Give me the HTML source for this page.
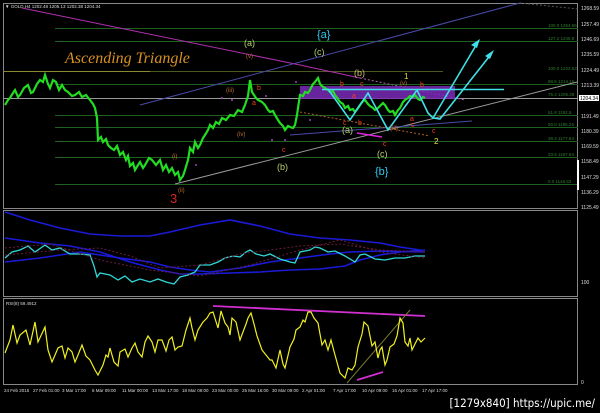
<!DOCTYPE html>
<html><head><meta charset="utf-8"><style>
html,body{margin:0;padding:0;background:#000;width:600px;height:413px;overflow:hidden}
svg{display:block;font-family:"Liberation Sans",sans-serif}
</style></head><body>
<svg width="600" height="413" viewBox="0 0 600 413" xmlns="http://www.w3.org/2000/svg">
<rect width="600" height="413" fill="#000"/>
<rect x="3.5" y="3.5" width="574" height="205" fill="none" stroke="#888" stroke-width="1"/>
<rect x="3.5" y="210.5" width="574" height="86" fill="none" stroke="#888" stroke-width="1"/>
<rect x="3.5" y="298.5" width="574" height="86" fill="none" stroke="#888" stroke-width="1"/>
<text x="5" y="8" font-size="4.5" fill="#ddd">▼ GOLD,H4  1202.48  1205.13  1202.38  1204.34</text>
<g stroke="#1f5f1f" stroke-width="1">
<line x1="55" y1="28.5" x2="578" y2="28.5"/><line x1="55" y1="41.5" x2="578" y2="41.5"/>
<line x1="55" y1="84.5" x2="578" y2="84.5"/>
<line x1="55" y1="115.5" x2="578" y2="115.5"/><line x1="55" y1="127.5" x2="578" y2="127.5"/>
<line x1="55" y1="141.5" x2="578" y2="141.5"/><line x1="55" y1="157.5" x2="578" y2="157.5"/>
<line x1="55" y1="184.5" x2="578" y2="184.5"/>
</g>
<line x1="3" y1="71.5" x2="150" y2="71.5" stroke="#8a8a30"/>
<line x1="150" y1="71.5" x2="443" y2="71.5" stroke="#4a5a20"/>
<line x1="3" y1="98.5" x2="578" y2="98.5" stroke="#999"/>
<g font-size="4.5" fill="#2f7f2f">
<text x="548" y="27">100.0 1254.55</text><text x="548" y="40">127.2 1245.8</text><text x="548" y="70">100.0 1223.53</text>
<text x="548" y="83">88.6 1214.15</text><text x="548" y="96">76.4 1206.28</text><text x="548" y="114">61.8 1192.5</text>
<text x="548" y="126">50.0 1185.25</text><text x="548" y="140">38.2 1177.84</text><text x="548" y="156">23.6 1167.94</text><text x="548" y="183">0.0 1146.53</text>
</g>
<g font-size="5" fill="#ddd">
<text x="581" y="10">1268.59</text><text x="581" y="26">1257.49</text><text x="581" y="41">1246.69</text><text x="581" y="56">1235.59</text>
<text x="581" y="72">1224.49</text><text x="581" y="87">1213.39</text><text x="581" y="118">1191.49</text><text x="581" y="133">1180.39</text>
<text x="581" y="148">1169.59</text><text x="581" y="163">1158.49</text><text x="581" y="179">1147.29</text><text x="581" y="194">1136.29</text><text x="581" y="209">1125.49</text>
<text x="581" y="284">100</text><text x="581" y="384">0</text>
</g>
<rect x="579" y="95" width="20" height="6" fill="#fff"/><text x="580" y="100" font-size="5" fill="#000">1204.34</text>
<rect x="577" y="160" width="2" height="30" fill="#fff"/>
<polyline points="22,8 300,65 360,78" fill="none" stroke="#b030b0" stroke-width="1"/>
<line x1="360" y1="78" x2="465" y2="100" stroke="#b060b0" stroke-dasharray="2,2"/>
<line x1="140" y1="105" x2="520" y2="3" stroke="#4a4aa8"/>
<line x1="520" y1="3" x2="578" y2="9" stroke="#555" stroke-dasharray="2,2"/>
<line x1="175" y1="184" x2="577" y2="82" stroke="#999"/>
<line x1="290" y1="135" x2="472" y2="121" stroke="#4a4aa8"/>
<line x1="300" y1="112" x2="430" y2="136" stroke="#b06020" stroke-dasharray="2,2"/>
<line x1="357" y1="133" x2="382" y2="137" stroke="#e020e0" stroke-width="1.5"/>
<rect x="300" y="86" width="155" height="13" fill="#7a2ab8" opacity="0.85"/>
<polyline fill="none" stroke="#22dd22" stroke-width="2.2" points="5,105 8,100 10,98 13,93 15,90 18,97 20,95 24,88 28,85 31,93 33,92 37,84 40,80 43,82 45,75 48,84 50,88 53,80 56,82 59,90 62,85 65,90 68,92 72,96 75,95 79,92 82,97 86,95 90,100 93,104 95,108 97,118 98,140 101,137 103,142 106,139 108,145 111,148 114,150 117,146 120,155 123,152 126,160 128,156 130,166 133,163 135,170 138,165 140,162 143,168 145,165 149,158 152,160 156,165 160,160 163,170 166,165 169,172 172,168 175,175 178,172 180,180 183,176 185,170 188,160 190,148 193,152 195,142 198,148 200,145 203,138 205,135 208,130 210,125 213,128 216,122 219,124 222,118 226,120 230,115 234,116 238,110 242,112 245,105 248,96 250,80 252,92 254,95 256,98 258,100 262,102 265,105 268,110 270,112 273,111 275,115 278,120 280,123 283,126 285,130 288,126 290,127 293,128 295,125 297,115 298,108 300,95 303,96 305,92 308,93 310,90 313,84 315,82 318,78 320,84 322,86 325,88 328,90 330,92 333,91 335,95 338,99 340,102 343,104 345,108 348,106 350,110 353,109 355,112 358,108 360,105 363,101 365,100 368,104 370,106 373,108 375,110 378,108 380,106 383,103 385,105 388,110 390,112 393,111 395,115 398,110 400,108 403,102 405,100 408,98 410,96 413,97 415,95 418,99 420,100 423,97 425,98"/>
<line x1="322" y1="89.5" x2="504" y2="89.5" stroke="#40e0e8" stroke-width="1.6"/>
<polyline points="328,89 350,120 368,93 388,130 417,90 428,113 433,118 478,42" fill="none" stroke="#40e0e8" stroke-width="1.6"/>
<polyline points="433,118 440,119 492,53" fill="none" stroke="#40e0e8" stroke-width="1.6"/>
<polygon points="480,39 471,45 477,48" fill="#40e0e8"/>
<polygon points="494,50 485,56 490,59" fill="#40e0e8"/>
<text x="65" y="63" font-family="Liberation Serif,serif" font-style="italic" font-size="16" fill="#d89020">Ascending Triangle</text>
<g font-size="9" fill="#b8d070"><text x="244" y="46">(a)</text><text x="314" y="55">(c)</text><text x="354" y="76" fill="#c8c060">(b)</text><text x="342" y="133">(a)</text><text x="377" y="157">(c)</text><text x="277" y="170">(b)</text></g>
<text x="317" y="38" font-size="11" fill="#30c8f0">{a}</text>
<text x="375" y="175" font-size="11" fill="#30c8f0">{b}</text>
<text x="170" y="203" font-size="13" fill="#e02020">3</text>
<text x="404" y="79" font-size="8" fill="#e8e040">1</text>
<text x="434" y="144" font-size="8" fill="#e8e040">2</text>
<g font-size="7" fill="#f04020"><text x="257" y="90">b</text><text x="252" y="105">a</text><text x="282" y="152">c</text><text x="340" y="86">b</text><text x="360" y="86">c</text><text x="352" y="98">a</text><text x="343" y="125">c</text><text x="358" y="125">b</text><text x="383" y="146">c</text><text x="420" y="87">b</text><text x="410" y="121">a</text><text x="432" y="133">c</text><text x="411" y="127">c</text></g>
<g font-size="6" fill="#c07030"><text x="172" y="158">(i)</text><text x="178" y="192">(ii)</text><text x="226" y="92">(iii)</text><text x="237" y="136">(iv)</text><text x="246" y="58">(v)</text><text x="400" y="85">(v)</text><text x="390" y="130">(iii)</text></g>
<g fill="#a040c0"><circle cx="222" cy="98" r="1"/><circle cx="232" cy="100" r="1"/><circle cx="266" cy="96" r="1"/><circle cx="272" cy="140" r="1"/><circle cx="285" cy="140" r="1"/><circle cx="296" cy="82" r="1"/><circle cx="310" cy="120" r="1"/><circle cx="196" cy="165" r="1"/></g>
<g fill="none" stroke-width="1.6">
<polyline stroke="#1a1ad8" points="5,212 30,220 60,228 90,234 120,236 150,236 170,232 200,225 230,220 260,226 290,234 320,238 350,240 380,243 400,247 420,250"/>
<polyline stroke="#1a1ad8" points="5,238 40,243 70,246 100,252 130,262 160,270 180,274 200,274 230,273 260,272 290,270 320,269 345,266 360,260 380,255 400,252 425,250"/>
<polyline stroke="#1a1ad8" points="5,262 40,258 60,255 80,252 100,255 120,258 150,262 170,267 190,270 210,272 240,268 270,262 300,258 330,254 350,252 380,251 425,252"/>
<polyline stroke="#30d8d8" stroke-width="1.3" points="5,258 12,252 20,250 28,246 35,252 45,245 52,250 60,248 70,254 80,254 90,255 94,266 97,277 100,273 110,275 118,280 125,276 132,282 140,279 150,282 158,279 166,282 174,284 180,277 188,275 195,272 200,265 210,265 218,262 225,258 233,256 240,257 246,252 250,250 256,254 264,256 270,254 280,259 290,262 295,263 300,252 310,250 315,247 320,248 328,252 335,251 345,256 355,262 360,255 365,254 375,259 385,260 395,258 405,258 415,256 425,256"/>
</g>
<g fill="none" stroke="#6a1a3a" stroke-dasharray="2,2">
<polyline points="5,255 60,250 100,248 130,256 160,268 200,265 240,254 300,246 340,244 380,250 425,252"/>
<polyline points="5,248 50,244 100,260 150,270 200,276 250,265 300,250 340,240 380,252 425,258"/>
</g>
<text x="6" y="305" font-size="4.5" fill="#ddd">RSI(8) 59.4912</text>
<line x1="213" y1="306" x2="425" y2="316" stroke="#d030d0" stroke-width="1.8"/>
<line x1="357" y1="380" x2="383" y2="372" stroke="#d030d0" stroke-width="1.8"/>
<line x1="347" y1="383" x2="410" y2="310" stroke="#7a7a2a"/>
<polyline fill="none" stroke="#f0f020" stroke-width="1.2" points="5,353 10,340 13,325 17,343 20,335 26,330 30,345 35,322 38,342 45,327 48,350 52,362 55,355 58,348 62,346 65,358 68,348 72,352 75,362 78,355 82,345 86,356 90,360 95,370 98,375 103,365 106,355 108,357 110,348 114,362 118,366 120,352 125,349 128,357 132,348 135,343 138,352 142,357 145,342 148,336 152,342 155,352 158,340 162,340 166,351 169,340 172,337 175,350 178,347 182,346 186,330 190,318 192,328 195,340 198,330 203,322 207,318 210,313 213,312 218,328 221,311 225,323 228,327 230,335 232,318 236,322 240,340 243,332 246,324 248,318 251,313 254,324 257,336 262,350 266,355 270,360 272,360 276,368 280,350 283,364 285,368 290,347 294,339 296,330 300,327 303,320 305,322 308,312 311,312 314,318 318,323 322,345 325,340 328,350 331,340 335,355 340,373 345,378 348,368 352,370 355,365 358,347 362,334 364,322 368,326 372,346 375,342 378,358 380,350 382,347 385,365 387,360 390,347 394,344 397,336 400,318 403,323 405,342 408,346 410,338 412,350 415,344 418,338 421,342 425,338"/>
<g font-size="4.5" fill="#ddd">
<text x="4" y="392">24 Feb 2015</text><text x="33" y="392">27 Feb 01:00</text><text x="62" y="392">3 Mar 17:00</text><text x="92" y="392">6 Mar 09:00</text>
<text x="122" y="392">11 Mar 00:00</text><text x="152" y="392">13 Mar 17:00</text><text x="182" y="392">18 Mar 09:00</text><text x="212" y="392">23 Mar 00:00</text>
<text x="242" y="392">25 Mar 16:00</text><text x="272" y="392">30 Mar 09:00</text><text x="302" y="392">2 Apr 01:00</text><text x="333" y="392">7 Apr 17:00</text>
<text x="362" y="392">10 Apr 09:00</text><text x="392" y="392">15 Apr 01:00</text><text x="422" y="392">17 Apr 17:00</text>
</g>
<text x="595" y="407" font-size="11.5" fill="#fff" text-anchor="end" font-family="DejaVu Sans Condensed,Liberation Sans,sans-serif">[1279x840] https://upic.me/</text>
</svg>
</body></html>
